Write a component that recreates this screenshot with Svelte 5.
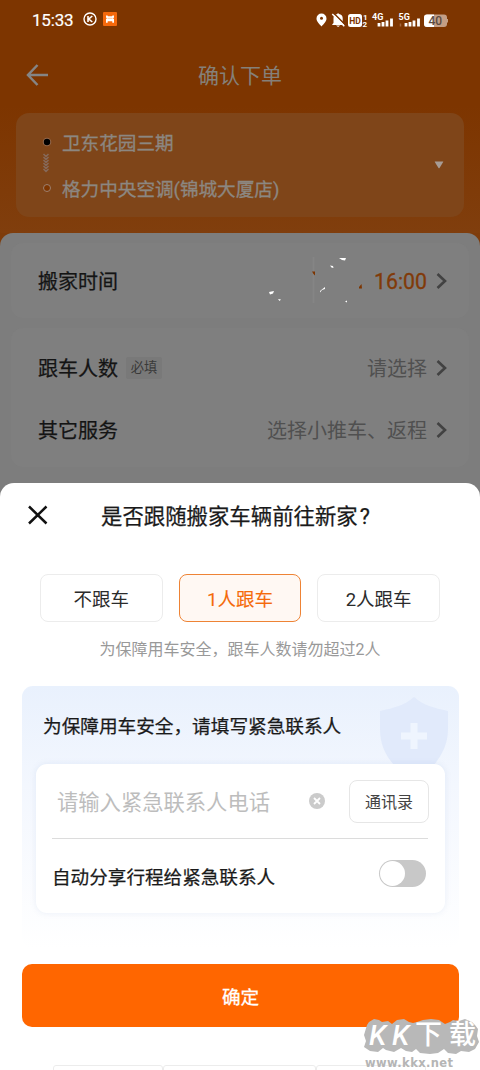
<script lang="ts">
	const options = ['不跟车', '1人跟车', '2人跟车'];
	let selected = $state(1);
	let autoShare = $state(false);
	let phone = $state('');
</script>

{#snippet chevron()}
	<svg class="chevron" viewBox="0 0 12 18" width="12" height="18">
		<path d="M1.5 2l7.5 7-7.5 7" fill="none" stroke="#424242" stroke-width="2.6" />
	</svg>
{/snippet}

<div class="screen">
	<header class="top">
		<div class="status">
			<span class="clock">15:33</span>
			<svg class="k-icon" viewBox="0 0 14 14" width="14" height="14">
				<circle cx="7" cy="7" r="6" fill="none" stroke="#fff" stroke-width="1.4" />
				<path d="M5 4v6M9.3 4L5.8 7l3.5 3" fill="none" stroke="#fff" stroke-width="1.6" />
			</svg>
			<svg class="app-icon" viewBox="0 0 14 14" width="14" height="14">
				<rect width="14" height="14" rx="1" fill="#f5690c" />
				<path
					d="M3 3.5h1.500l.5.8h4l.5-.8H11v2.300h-.6v1.100h.6v3.800H9.300V9.200H4.700v1.500H3V6.900h.6V5.800H3z"
					fill="#fff"
				/>
				<path d="M4.500 6.300h5" stroke="#f5690c" stroke-width=".4" />
			</svg>

			<div class="signals">
				<svg viewBox="0 0 132 18" width="132" height="18">
					<path
						d="M5.5 3.5a5 5 0 0 1 5 5c0 3.3-3 5.5-5 8-2-2.5-5-4.7-5-8a5 5 0 0 1 5-5z"
						fill="#fff"
					/>
					<circle cx="5.5" cy="8.3" r="1.5" fill="#7d3500" />
					<path
						d="M17.5 13V8c0-2 1.5-3.5 3.7-3.9v-.6H23v.6c2.2.4 3.7 1.9 3.7 3.9v5l1.3 1.3v.7H16.3v-.7zM20 15.4h4.200L22.100 17z"
						fill="#fff"
					/>
					<path d="M17.5 3l12 12" stroke="#7d3500" stroke-width="1.6" />
					<path d="M16.3 4l12 12.3" stroke="#fff" stroke-width="1.5" />
					<rect x="32" y="4" width="14" height="13" rx="2.5" fill="#fff" />
					<text class="hd" x="33.2" y="14" textLength="11.6" lengthAdjust="spacingAndGlyphs">HD</text>
					<text class="tiny" x="47" y="9.5">1</text>
					<text class="tiny" x="46.5" y="17">2</text>
					<text class="net" x="56" y="10" textLength="11.5">4G</text>
					<path
						d="M63 16.5V13M67 16.5V12M71 16.5v-6M75.5 16.5v-8"
						stroke="#fff"
						stroke-width="2.8"
					/>
					<text class="net" x="82.5" y="10" textLength="11.5">5G</text>
					<path
						d="M90 16.5V13M94 16.5V12M98 16.5v-6M102.5 16.5v-8"
						stroke="#fff"
						stroke-width="2.8"
					/>
					<path d="M84.5 13.5v3" stroke="#a56a40" stroke-width="1.5" />
					<path
						d="M111 4.5h17a3 3 0 0 1 3 3V9h1v3.5h-1V14a3 3 0 0 1-3 3h-17a3 3 0 0 1-3-3V7.5a3 3 0 0 1 3-3z"
						fill="#c49f86"
					/>
					<path d="M111 4.5h7V17h-7a3 3 0 0 1-3-3V7.5a3 3 0 0 1 3-3z" fill="#fff" />
					<text class="level" x="112.5" y="15.2">40</text>
				</svg>
			</div>
		</div>

		<nav class="nav">
			<svg class="back" viewBox="0 0 22 22" width="22" height="22">
				<path d="M11.5 1L2 11l9.5 10M2 11h20" fill="none" stroke="#858585" stroke-width="2.5" />
			</svg>
			<h1>确认下单</h1>
		</nav>

		<section class="route">
			<svg class="track" viewBox="0 0 12 60" width="12" height="60">
				<circle cx="6" cy="7" r="4.3" fill="#94674a" />
				<circle cx="6" cy="7" r="3.2" fill="#000" />
				<path
					d="M2.5 19L5 21.5 7.5 19M2.5 25L5 27.5 7.5 25M2.5 31L5 33.5 7.5 31M2.5 22L5 24.5 7.5 22M2.5 28L5 30.5 7.5 28M2.5 34L5 36.5 7.5 34"
					fill="none"
					stroke="#86695a"
					stroke-width="1.5"
				/>
				<circle cx="6" cy="53" r="3.5" fill="#7d3500" stroke="#9c8070" stroke-width="1" />
			</svg>
			<div class="stops">
				<span>卫东花园三期</span>
				<span>格力中央空调(锦城大厦店)</span>
			</div>
			<svg class="caret" viewBox="0 0 10 8" width="10" height="8">
				<path d="M1 .5h8q.5 0 .2.5L5.5 7q-.5.6-1 0L.8 1Q.5.5 1 .5z" fill="#a79c95" />
			</svg>
		</section>
	</header>

	<main class="order">
		<section class="card time">
			<div class="row">
				<span class="label">搬家时间</span>
				<svg class="flecks" viewBox="0 0 100 50" width="100" height="50">
					<path d="M48.5 1v46" stroke="#858585" stroke-width="2" />
					<path
						d="M4 36l5-1-1 2.5-3 1zM13 43l3 .5-1.5 1.5zM74 2h7l-1 2.5-3-.5zM65 9.5l3 .5.5 2-2-.5zM55 35l5-4v2l-3 1-2 2.5zM80 45.5l2-1v2z"
						fill="#fff"
					/>
					<path d="M47 15.500h3v4l-1.500-1.500zM94 31l2.500-3 .5 4.500h-3z" fill="#7d3500" />
				</svg>
				<span class="hour">16:00</span>
				{@render chevron()}
			</div>
		</section>
		<section class="card extras">
			<div class="row">
				<span class="label">跟车人数</span>
				<span class="tag">必填</span>
				<span class="value">请选择</span>
				{@render chevron()}
			</div>
			<div class="row">
				<span class="label">其它服务</span>
				<span class="value">选择小推车、返程</span>
				{@render chevron()}
			</div>
		</section>
	</main>

	<div class="sheet" role="dialog" aria-label="是否跟随搬家车辆前往新家?">
		<div class="sheet-head">
			<button class="close" aria-label="关闭">
				<svg viewBox="0 0 20 20" width="20" height="20">
					<path d="M1 1.5l17.5 17M18.500 1.500L1 18.500" stroke="#111" stroke-width="2.5" />
				</svg>
			</button>
			<h2>是否跟随搬家车辆前往新家<span class="ask">?</span></h2>
		</div>

		<div class="options">
			{#each options as option, i}
				<button class="option" class:active={i === selected} onclick={() => (selected = i)}>
					{option}
				</button>
			{/each}
		</div>
		<p class="hint">为保障用车安全，跟车人数请勿超过2人</p>

		<section class="contact">
			<svg class="shield" viewBox="0 0 70 68" width="70" height="68">
				<path
					d="M35 0c9 8 20 11 34 14v18c0 16-7 27-14 36H15C7 59 1 48 1 32V14C15 11 26 8 35 0z"
					fill="#e1eafb"
				/>
				<path d="M35 26v26M22 39h26" stroke="#eff5fe" stroke-width="7" />
			</svg>
			<h3>为保障用车安全，请填写紧急联系人</h3>
			<div class="form">
				<div class="phone">
					<input type="tel" placeholder="请输入紧急联系人电话" bind:value={phone} />
					<svg class="clear" viewBox="0 0 16 16" width="16" height="16">
						<circle cx="8" cy="8" r="8" fill="#cbcbcb" />
						<path d="M5 5l6 6M11 5l-6 6" stroke="#fff" stroke-width="1.8" />
					</svg>
					<button class="book">通讯录</button>
				</div>
				<div class="share">
					<span>自动分享行程给紧急联系人</span>
					<button
						class="switch"
						class:on={autoShare}
						role="switch"
						aria-checked={autoShare}
						aria-label="自动分享行程"
						onclick={() => (autoShare = !autoShare)}
					>
						<i></i>
					</button>
				</div>
			</div>
		</section>

		<button class="confirm">确定</button>

		<div class="keys">
			<i></i>
			<i></i>
			<i></i>
		</div>
	</div>

	<div class="mark">
		<svg viewBox="0 0 116 34" width="116" height="34">
			<path
				d="M3 7l2-3 5-3 5 1 3 2 6-1 4 3 5-4 7-1 5 3 4 1 4-1 6-2 8-1 8 1 6 4 5-2 3-2 6 1 6-2 7 3 3 3 3 4-1 7 2 6-4 7-6 3-8-1-5 3-8-1-4-4-6 4-8 1-10-1-4-4-4 3-6-1-5-3-7 4-8-2-3-2-5 4-8-1-6-4 2-6-2-6z"
				fill="#b8b8b8"
			/>
			<text class="mark-text" x="5" y="27">K</text>
			<text class="mark-text" x="28" y="27">K</text>
			<text class="mark-text cjk" x="51" y="26">下</text>
			<text class="mark-text cjk" x="85" y="26">载</text>
		</svg>
		<span>www.kkx.net</span>
	</div>
</div>

<style>
	:global(body) {
		margin: 0;
		background: #fff;
	}

	.screen {
		position: relative;
		width: 480px;
		height: 1070px;
		overflow: hidden;
		display: flex;
		flex-direction: column;
		background: #7e3c0b;
		font-family: Roboto, 'Noto Sans CJK SC', sans-serif;
		color: #1a1a1a;
	}
	h1,
	h2,
	h3,
	p {
		margin: 0;
		font-weight: 400;
	}
	button,
	input {
		font-family: inherit;
		padding: 0;
		border: 0;
		background: none;
		color: inherit;
	}
	svg {
		display: block;
		flex: none;
	}

	/* Header */
	.top {
		height: 233px;
		flex: none;
		background: linear-gradient(#7d3500 45%, #803e0d);
	}
	.status {
		display: flex;
		align-items: center;
		height: 38px;
		padding: 0 32px;
		color: #fff;
	}
	.clock {
		width: 41px;
		font-size: 17px;
		letter-spacing: -0.2px;
		line-height: 36px;
		padding-top: 2px;
		-webkit-text-stroke: 0.2px;
	}
	.k-icon {
		margin-left: 10px;
	}
	.app-icon {
		margin-left: 6px;
	}
	.signals {
		margin-left: auto;
	}
	.hd,
	.tiny,
	.net,
	.level {
		font-family: Roboto, sans-serif;
		font-weight: 700;
		fill: #fff;
	}
	.hd {
		font-size: 9px;
		fill: #7d3500;
	}
	.tiny {
		font-size: 8px;
	}
	.net {
		font-size: 9px;
	}
	.level {
		font-size: 12px;
		font-weight: 500;
		fill: #5b4a40;
	}

	.nav {
		display: flex;
		align-items: center;
		height: 75px;
		padding-left: 26px;
	}
	.back {
		margin-bottom: 1px;
	}
	h1 {
		margin-left: 150px;
		padding-top: 1px;
		font-size: 21px;
		line-height: 30px;
		color: #858079;
	}

	.route {
		display: flex;
		align-items: center;
		box-sizing: border-box;
		height: 104px;
		margin: 0 16px;
		padding: 0 20px 0 25px;
		border-radius: 13px;
		background: #7f4519;
	}
	.stops {
		display: flex;
		flex-direction: column;
		margin-left: 9px;
		padding-top: 3px;
		font-size: 18.6px;
		line-height: 46px;
		color: #8c8781;
		-webkit-text-stroke: 0.3px;
	}
	.caret {
		margin-left: auto;
	}

	/* Order form under the dimmed layer */
	.order {
		flex: 1;
		padding: 10px 11px 0;
		border-radius: 13px 13px 0 0;
		background: #7d7d7d;
	}
	.card {
		display: flex;
		flex-direction: column;
		box-sizing: border-box;
		padding: 0 21px 0 27px;
		border-radius: 12px;
		background: #7f7f7f;
	}
	.time {
		height: 75px;
		padding-top: 7px;
	}
	.extras {
		height: 139px;
		margin-top: 10px;
		padding-top: 9px;
	}
	.row {
		display: flex;
		align-items: center;
		height: 62px;
		font-size: 20px;
		line-height: 28px;
	}
	.label {
		padding-top: 2px;
		color: #141414;
		-webkit-text-stroke: 0.25px;
	}
	.flecks {
		margin-left: auto;
	}
	.hour {
		margin-left: 9px;
		padding-top: 2px;
		font-size: 21.3px;
		color: #813a08;
		-webkit-text-stroke: 0.3px;
	}
	.tag {
		width: 36px;
		margin-left: 8px;
		border-radius: 2px;
		background: #797979;
		font-size: 13.3px;
		line-height: 22px;
		text-align: center;
		color: #3a3a3a;
	}
	.value {
		margin-left: auto;
		padding-top: 2px;
		color: #505050;
	}
	.chevron {
		margin-left: 9px;
	}

	/* Bottom sheet */
	.sheet {
		position: absolute;
		left: 0;
		right: 0;
		bottom: 0;
		height: 587px;
		display: flex;
		flex-direction: column;
		border-radius: 14px 14px 0 0;
		background: #fff;
	}
	.sheet-head {
		display: flex;
		align-items: center;
		height: 64px;
		padding-left: 28px;
	}
	h2 {
		margin-left: 53px;
		padding-top: 4px;
		font-size: 21.4px;
		line-height: 30px;
		-webkit-text-stroke: 0.25px;
	}
	.ask {
		margin-left: 2px;
	}
	.options {
		display: flex;
		gap: 16px;
		padding: 27px 40px 0;
	}
	.option {
		flex: 1;
		height: 48px;
		box-sizing: border-box;
		border: 1px solid #ececec;
		border-radius: 8px;
		font-size: 18.5px;
		color: #2b2b2b;
	}
	.option.active {
		border-color: #ee8335;
		background: #fff8f3;
		color: #f56a0a;
		-webkit-text-stroke: 0.1px;
	}
	.hint {
		margin-top: 16px;
		font-size: 16px;
		line-height: 24px;
		text-align: center;
		color: #999;
	}

	.contact {
		position: relative;
		box-sizing: border-box;
		height: 262px;
		margin: 24px 21px 0 22px;
		padding: 0 14px;
		border-radius: 11px;
		background: linear-gradient(#e9f1fd, #f3f7fe 38%, #fff);
	}
	.shield {
		position: absolute;
		top: 11px;
		right: 10px;
	}
	h3 {
		position: relative;
		box-sizing: border-box;
		height: 78px;
		padding: 4px 0 0 7px;
		font-size: 18.65px;
		line-height: 74px;
		-webkit-text-stroke: 0.25px;
	}
	.form {
		position: relative;
		box-sizing: border-box;
		height: 149px;
		padding: 0 17px 0 16px;
		border-radius: 11px;
		background: #fff;
		box-shadow: 0 0 6px rgba(120, 150, 200, 0.14);
	}
	.phone {
		display: flex;
		align-items: center;
		height: 74px;
		padding-left: 5px;
		border-bottom: 1px solid #dcdcdc;
	}
	input {
		flex: 1;
		min-width: 0;
		height: 34px;
		padding-top: 3px;
		font-size: 21.3px;
		outline: none;
	}
	input::placeholder {
		color: #bdbdbd;
		opacity: 1;
	}
	.clear {
		margin-right: 24px;
	}
	.book {
		width: 80px;
		height: 43px;
		margin-right: -1px;
		box-sizing: border-box;
		border: 1px solid #e6e6e6;
		border-radius: 8px;
		font-size: 16px;
		color: #444;
	}
	.share {
		display: flex;
		align-items: center;
		justify-content: space-between;
		height: 70px;
		padding-right: 2px;
		font-size: 18.6px;
		-webkit-text-stroke: 0.25px;
	}
	.share span {
		padding-top: 3px;
	}
	.switch {
		display: flex;
		width: 47px;
		height: 27px;
		margin-bottom: 1px;
		padding: 1px;
		box-sizing: border-box;
		border-radius: 14px;
		background: #c8c8c8;
	}
	.switch i {
		width: 25px;
		height: 25px;
		border-radius: 50%;
		background: #fff;
	}
	.switch.on {
		justify-content: flex-end;
		background: #f60;
	}

	.confirm {
		height: 63px;
		flex: none;
		margin: 16px 21px 0 22px;
		border-radius: 10px;
		background: #f60;
		font-size: 18.6px;
		color: #fff;
		-webkit-text-stroke: 0.3px;
	}
	.keys {
		display: flex;
		margin: auto 0 0 53px;
		height: 5px;
		overflow: hidden;
	}
	.keys i {
		width: 110px;
		height: 12px;
		box-sizing: border-box;
		border: 1px solid #ececec;
		border-radius: 3px;
	}
	.keys i:nth-child(2) {
		width: 153px;
	}

	/* Site mark over the corner */
	.mark {
		position: absolute;
		right: 0;
		bottom: 0;
		width: 116px;
		height: 52px;
	}
	.mark svg {
		overflow: visible;
	}
	.mark-text {
		font: italic 500 28px Roboto, sans-serif;
		fill: #fff;
	}
	.mark-text.cjk {
		font: 500 27px 'Noto Sans CJK SC', sans-serif;
	}
	.mark span {
		display: block;
		margin: 4px 0 0 1px;
		font: 700 11.5px/14px 'DejaVu Sans', sans-serif;
		letter-spacing: 0.4px;
		color: #b5b5b5;
	}
</style>
